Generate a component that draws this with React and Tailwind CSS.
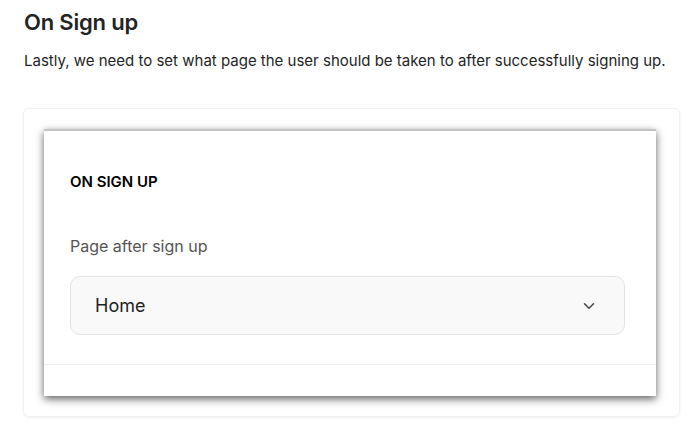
import React from "react";
import { ChevronDown } from "lucide-react";

const App = () => {
  return (
    <div className="w-[690px] h-[430px] bg-white overflow-hidden font-['Inter',sans-serif] text-[#242424]">
      <div className="pl-6 pt-[7px]">
        <h2 className="text-[22px] leading-[30px] font-semibold tracking-[-0.2px]">On Sign up</h2>
        <p className="mt-[13px] text-[15px] leading-[22px]">
          Lastly, we need to set what page the user should be taken to after successfully signing up.
        </p>
      </div>

      <div className="ml-[23px] mt-[36px] w-[657px] h-[309px] rounded-md border border-[#f1f1f1] shadow-[0_1px_3px_rgba(0,0,0,0.06)] pt-[20px] pl-[20px]">
        <div className="w-[612px] h-[267px] bg-white border-t-2 border-[#c4c4c4] shadow-[0_3px_8px_rgba(0,0,0,0.62)] flex flex-col">
          <div className="px-[26px] pt-[42px]">
            <div className="text-[15px] leading-[18px] font-semibold text-black">ON SIGN UP</div>
            <div className="mt-[45px] text-[16px] leading-[20px] text-[#555]">Page after sign up</div>
            <div className="mt-[20px] h-[59px] w-[555px] rounded-[10px] border border-[#e4e4e7] bg-[#f9f9fa] flex items-center justify-between pl-[24px] pr-[26px]">
              <span className="text-[18px] text-[#1f1f1f]">Home</span>
              <ChevronDown size={18} strokeWidth={2} className="text-[#444]" />
            </div>
          </div>
          <div className="mt-[29px] border-t border-[#eeeeee]" />
        </div>
      </div>
    </div>
  );
};

export default App;
